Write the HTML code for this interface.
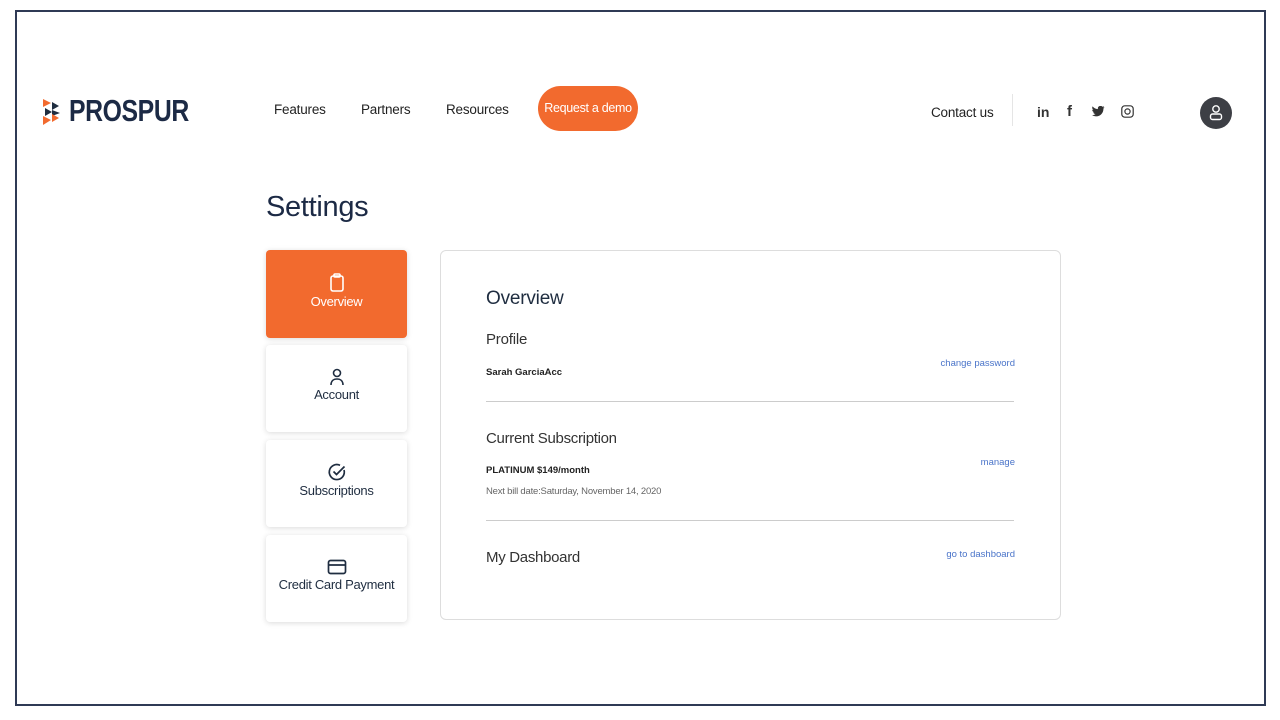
<!DOCTYPE html>
<html><head><meta charset="utf-8"><style>
*{box-sizing:border-box;margin:0;padding:0}
body{width:1280px;height:720px;background:#fff;font-family:"Liberation Sans",sans-serif;color:#1f2d40;position:relative;overflow:hidden}
.frame{position:absolute;left:15px;top:10px;width:1251px;height:696px;border:2px solid #2f3a55}
.a{position:absolute}
.nav{font-size:13.5px;color:#222;top:102px;letter-spacing:-0.2px}
.demo{left:538px;top:86px;width:100px;height:45px;border-radius:23px;background:#f26a2e;color:#fff;font-size:12.5px;text-align:center;line-height:45px;letter-spacing:-0.3px}
.card{position:absolute;left:266px;width:141px;height:87px;background:#fff;border-radius:4px;box-shadow:0 1px 6px rgba(0,0,0,.15);text-align:center;font-size:13px;color:#1f2d40;letter-spacing:-0.3px}
.card svg{display:block;margin:0 auto}
.main{left:440px;top:250px;width:621px;height:370px;border:1px solid #ddd;border-radius:6px}
.link{font-size:9.5px;color:#4a74c9;right:0}
.hr{left:486px;width:528px;height:1px;background:#ccc}
</style></head><body>
<div class="frame"></div>
<svg class="a" style="left:42px;top:98px" width="28" height="28" viewBox="0 0 28 28">
<polygon points="1,1 9,5 1,9" fill="#f26a2e"/><polygon points="10,4 17,8 10,12" fill="#1f2d40"/>
<polygon points="3,10 10,14 3,18" fill="#1f2d40"/><polygon points="10,12 18,15 10,18" fill="#1f2d40"/>
<polygon points="1,18 9,22 1,27" fill="#f26a2e"/><polygon points="10,16 17,20 10,24" fill="#f26a2e"/></svg>
<div class="a" style="left:69px;top:93px;font-size:31px;font-weight:bold;color:#1c2a45;letter-spacing:-0.5px;transform:scaleX(0.8);transform-origin:left">PROSPUR</div>
<div class="a nav" style="left:274px">Features</div>
<div class="a nav" style="left:361px">Partners</div>
<div class="a nav" style="left:446px">Resources</div>
<div class="a demo">Request a demo</div>
<div class="a nav" style="left:931px;top:105px">Contact us</div>
<div class="a" style="left:1012px;top:94px;width:1px;height:32px;background:#e5e5e5"></div>
<div class="a" style="left:1037px;top:104px;font-size:14px;font-weight:bold;color:#333">in</div>
<div class="a" style="left:1067px;top:103px;font-size:15px;font-weight:bold;color:#333">f</div>
<svg class="a" style="left:1092px;top:106px" width="13" height="11" viewBox="0 0 24 20"><path d="M23 2a9 9 0 0 1-2.8.8A5 5 0 0 0 22.3.1a10 10 0 0 1-3 1.2A4.8 4.8 0 0 0 11 5.7 13.6 13.6 0 0 1 1.1.6a4.8 4.8 0 0 0 1.5 6.5A4.7 4.7 0 0 1 .4 6.5a4.8 4.8 0 0 0 3.9 4.8 4.8 4.8 0 0 1-2.2.1 4.8 4.8 0 0 0 4.5 3.3A9.7 9.7 0 0 1 0 16.7 13.6 13.6 0 0 0 7.4 19c8.9 0 13.7-7.4 13.7-13.7v-.6A9.8 9.8 0 0 0 23 2z" fill="#333"/></svg>
<svg class="a" style="left:1121px;top:105px" width="13" height="13" viewBox="0 0 13 13" fill="none" stroke="#333" stroke-width="1.2"><rect x=".8" y=".8" width="11.4" height="11.4" rx="3"/><circle cx="6.5" cy="6.5" r="2.6"/></svg>
<div class="a" style="left:1200px;top:97px;width:32px;height:32px;border-radius:50%;background:#3d3f45"></div>
<svg class="a" style="left:1207px;top:103px" width="18" height="20" viewBox="0 0 18 20" fill="none" stroke="#fff" stroke-width="1.4"><circle cx="9" cy="6" r="3.2"/><rect x="3.5" y="11" width="11" height="5.5" rx="2"/></svg>
<div class="a" style="left:266px;top:191px;font-size:29px;color:#1c2a45;letter-spacing:-0.3px">Settings</div>
<div class="card" style="top:250px;background:#f26a2e;color:#fff;height:88px"><svg style="margin-top:23px" width="16" height="19" viewBox="0 0 16 19" fill="none" stroke="#fff" stroke-width="1.6"><rect x="2" y="3" width="12" height="15" rx="2"/><rect x="5" y="1" width="6" height="3" rx="1"/></svg><div style="margin-top:2px">Overview</div></div>
<div class="card" style="top:345px"><svg style="margin-top:23px" width="16" height="18" viewBox="0 0 16 18" fill="none" stroke="#1f2d40" stroke-width="1.6"><circle cx="8" cy="5" r="3.5"/><path d="M2 17c0-4 2.5-6 6-6s6 2 6 6"/></svg><div style="margin-top:1px">Account</div></div>
<div class="card" style="top:440px"><svg style="margin-top:22px" width="20" height="20" viewBox="0 0 20 20" fill="none" stroke="#1f2d40" stroke-width="1.7"><path d="M17 8A7.5 7.5 0 1 1 13 3.3"/><path d="M6.5 9.5l3 3 8-8"/></svg><div style="margin-top:1px">Subscriptions</div></div>
<div class="card" style="top:535px"><svg style="margin-top:24px" width="20" height="16" viewBox="0 0 20 16" fill="none" stroke="#1f2d40" stroke-width="1.7"><rect x="1.5" y="1.5" width="17" height="13" rx="2"/><path d="M1.5 6h17"/></svg><div style="margin-top:2px">Credit Card Payment</div></div>
<div class="a main"></div>
<div class="a" style="left:486px;top:288px;font-size:19px;color:#1f2d40;letter-spacing:-0.2px">Overview</div>
<div class="a" style="left:486px;top:331px;font-size:15px;color:#333;letter-spacing:-0.2px">Profile</div>
<div class="a" style="left:486px;top:367px;font-size:9.5px;font-weight:bold;color:#222">Sarah GarciaAcc</div>
<div class="a link" style="left:900px;width:115px;text-align:right;top:358px">change password</div>
<div class="a hr" style="top:401px"></div>
<div class="a" style="left:486px;top:430px;font-size:15px;color:#333;letter-spacing:-0.3px">Current Subscription</div>
<div class="a" style="left:486px;top:465px;font-size:9.5px;font-weight:bold;color:#222">PLATINUM $149/month</div>
<div class="a" style="left:486px;top:486px;font-size:9.5px;color:#666;letter-spacing:-0.2px">Next bill date:Saturday, November 14, 2020</div>
<div class="a link" style="left:900px;width:115px;text-align:right;top:457px">manage</div>
<div class="a hr" style="top:520px"></div>
<div class="a" style="left:486px;top:549px;font-size:15px;color:#333;letter-spacing:-0.3px">My Dashboard</div>
<div class="a link" style="left:900px;width:115px;text-align:right;top:549px">go to dashboard</div>
</body></html>
